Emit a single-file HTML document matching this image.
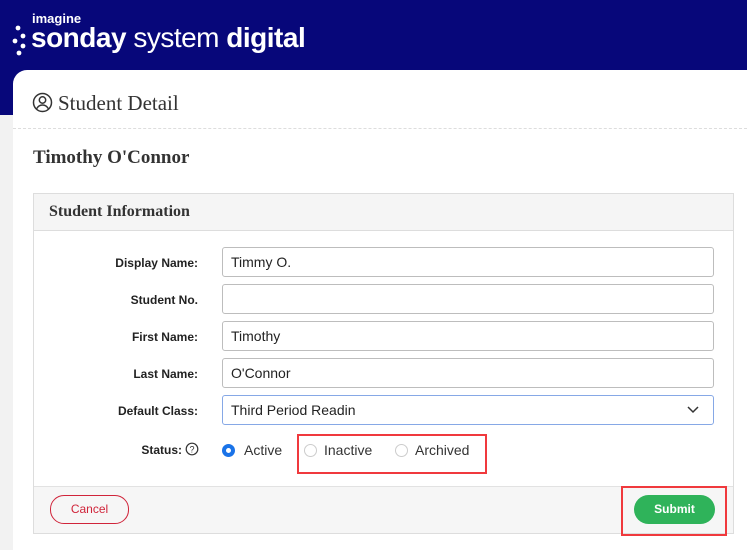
<!DOCTYPE html>
<html><head><style>
body{margin:0;width:747px;height:542px;overflow:hidden;background:#f2f2f2;font-family:"Liberation Sans",sans-serif;position:relative}
.top{position:absolute;left:0;top:0;width:747px;height:115px;background:#07077a}
.card{position:absolute;left:13px;top:70px;width:740px;height:480px;background:#fff;border-top-left-radius:14px}
.abs{position:absolute}
.lbl{position:absolute;right:549px;font-size:12px;font-weight:bold;color:#222}
.in{position:absolute;left:222px;width:482px;height:28px;border:1px solid #bdbdbd;border-radius:3px;font-size:14px;color:#222;line-height:28px;padding-left:8px}
.r{position:absolute;width:13px;height:13px;border-radius:50%;border:1px solid #ccc;box-sizing:border-box}
</style></head><body>
<div class="top"></div>
<div class="abs" style="left:32px;top:11px;color:#fff;font-size:13px;font-weight:bold">imagine</div>
<div class="abs" style="left:31px;top:22px;color:#fff;font-size:28px;font-weight:bold;letter-spacing:-0.5px">sonday <span style="font-weight:normal">system</span> digital</div>
<svg class="abs" style="left:12px;top:25px" width="16" height="32"><g fill="#fff"><circle cx="6" cy="3" r="2.4"/><circle cx="11" cy="11" r="2.4"/><circle cx="3" cy="16" r="2.4"/><circle cx="11" cy="21" r="2.4"/><circle cx="7" cy="28" r="2.4"/></g></svg>
<div class="card"></div>
<svg class="abs" style="left:32px;top:92px" width="21" height="21"><circle cx="10.5" cy="10.5" r="9" fill="none" stroke="#333" stroke-width="1.5"/><circle cx="10.5" cy="8" r="3.2" fill="none" stroke="#333" stroke-width="1.5"/><path d="M4.5 17c1.5-3 3.5-4 6-4s4.5 1 6 4" fill="none" stroke="#333" stroke-width="1.5"/></svg>
<div class="abs" style="left:58px;top:91px;font-family:'Liberation Serif',serif;font-size:21px;color:#333">Student Detail</div>
<div class="abs" style="left:13px;top:128px;width:734px;border-top:1px dashed #ddd"></div>
<div class="abs" style="left:33px;top:147px;font-family:'Liberation Serif',serif;font-size:19px;font-weight:bold;color:#333">Timothy O'Connor</div>
<div class="abs" style="left:33px;top:193px;width:699px;height:339px;border:1px solid #ddd"></div>
<div class="abs" style="left:34px;top:194px;width:699px;height:36px;background:#f5f5f5;border-bottom:1px solid #ddd"></div>
<div class="abs" style="left:49px;top:203px;font-family:'Liberation Serif',serif;font-size:16px;font-weight:bold;color:#333">Student Information</div>
<div class="lbl" style="top:256px">Display Name:</div><div class="in" style="top:247px">Timmy O.</div>
<div class="lbl" style="top:293px">Student No.</div><div class="in" style="top:284px"></div>
<div class="lbl" style="top:330px">First Name:</div><div class="in" style="top:321px">Timothy</div>
<div class="lbl" style="top:367px">Last Name:</div><div class="in" style="top:358px">O'Connor</div>
<div class="lbl" style="top:404px">Default Class:</div><div class="in" style="top:395px;border-color:#86a8e6">Third Period Readin</div>
<svg class="abs" style="left:687px;top:405px" width="12" height="10"><path d="M1 2l5 5 5-5" fill="none" stroke="#333" stroke-width="1.5"/></svg>
<div class="lbl" style="top:443px;right:565px">Status:</div>
<svg class="abs" style="left:185px;top:442px" width="14" height="14"><circle cx="7" cy="7" r="5.8" fill="none" stroke="#333" stroke-width="1.2"/><text x="7" y="10.5" font-size="9" text-anchor="middle" font-family="Liberation Sans" fill="#333">?</text></svg>
<div class="r" style="left:222px;top:444px;border:4px solid #1a73e8"></div>
<div class="abs" style="left:244px;top:442px;font-size:14px;color:#333">Active</div>
<div class="r" style="left:304px;top:444px"></div>
<div class="abs" style="left:324px;top:442px;font-size:14px;color:#333">Inactive</div>
<div class="r" style="left:395px;top:444px"></div>
<div class="abs" style="left:415px;top:442px;font-size:14px;color:#333">Archived</div>
<div class="abs" style="left:297px;top:434px;width:186px;height:36px;border:2px solid #f0393d"></div>
<div class="abs" style="left:34px;top:486px;width:699px;height:46px;background:#f6f6f6;border-top:1px solid #e2e2e2"></div>
<div class="abs" style="left:50px;top:495px;width:77px;height:27px;border:1px solid #d0243a;border-radius:14px;color:#d0243a;font-size:12px;text-align:center;line-height:27px">Cancel</div>
<div class="abs" style="left:634px;top:495px;width:81px;height:29px;background:#2fb35a;border-radius:15px;color:#fff;font-size:12px;font-weight:bold;text-align:center;line-height:29px">Submit</div>
<div class="abs" style="left:621px;top:486px;width:102px;height:46px;border:2px solid #f0393d"></div>
</body></html>
